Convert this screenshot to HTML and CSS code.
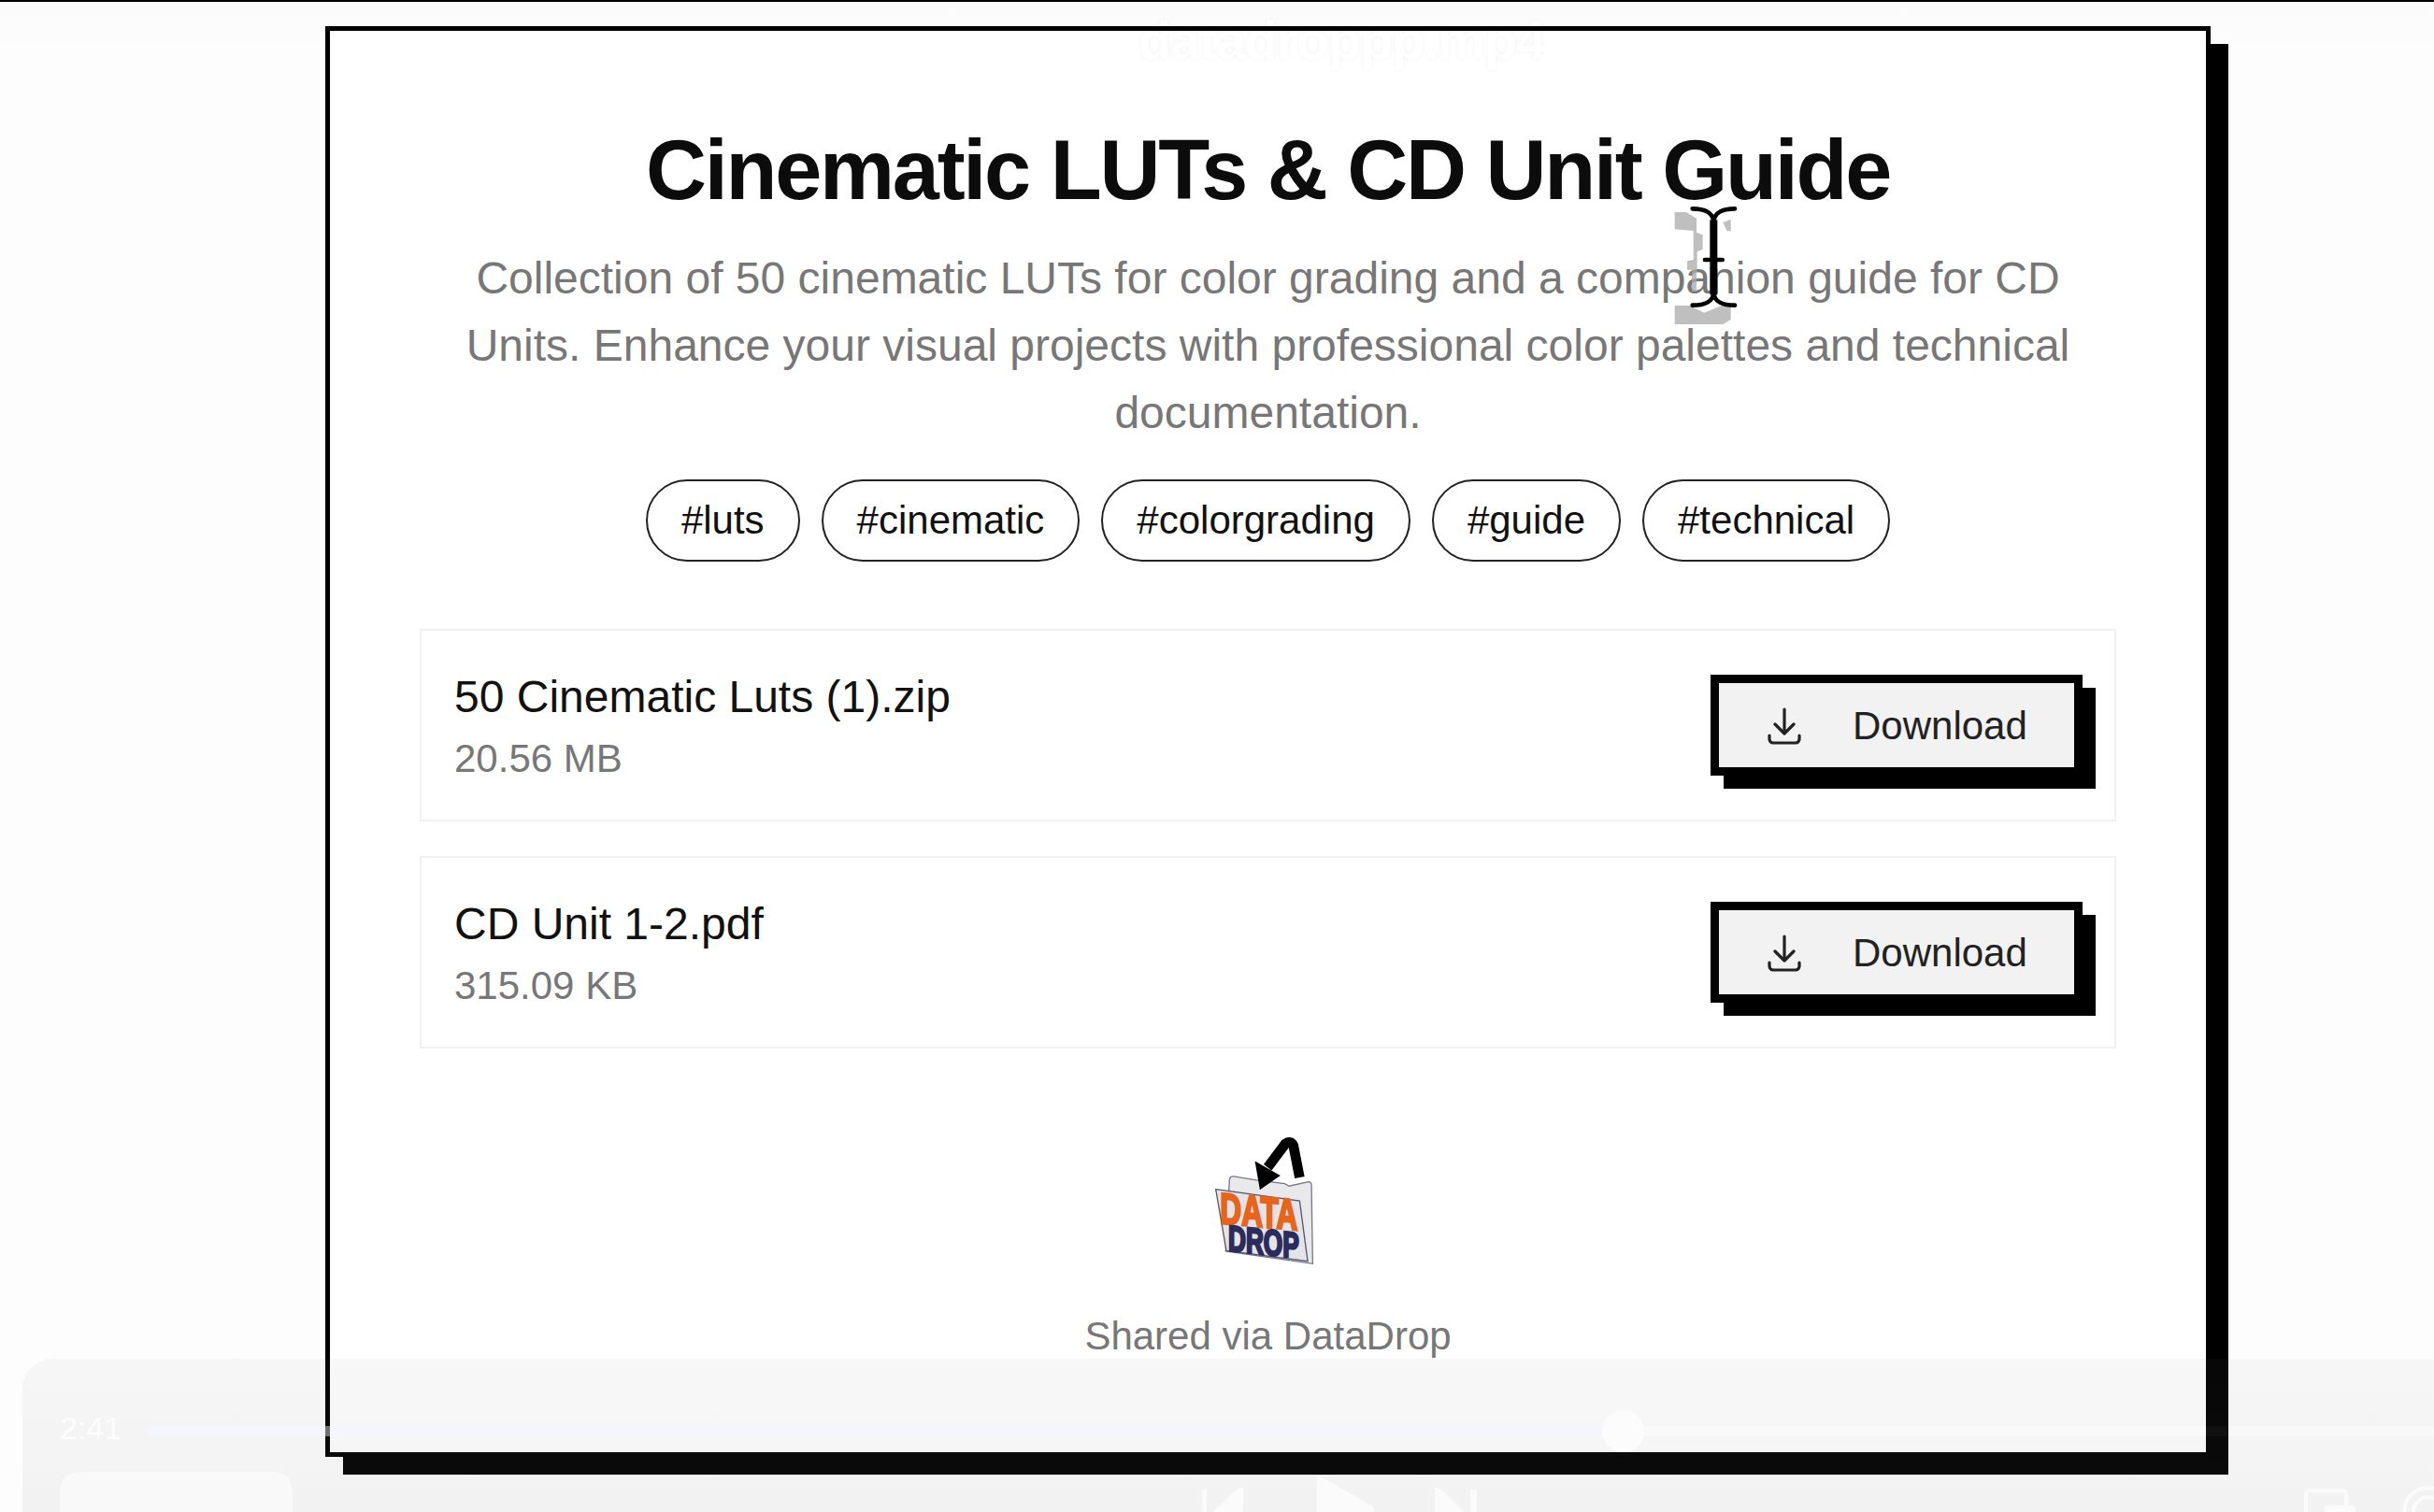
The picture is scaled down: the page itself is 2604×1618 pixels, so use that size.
FILE: index.html
```html
<!DOCTYPE html>
<html lang="en">
<head>
    <meta charset="UTF-8">
    <meta name="viewport" content="width=device-width, initial-scale=1.0">
    <title>Cinematic LUTs &amp; CD Unit Guide</title>
    <link rel="stylesheet" href="styles.css">
</head>
<body>
    <div class="share-card">
        <div class="video-title">datadroppp.mp4</div>

        <h1>Cinematic LUTs &amp; CD Unit Guide</h1>
        <p class="description">Collection of 50 cinematic LUTs for color grading and a companion guide for CD Units. Enhance your visual projects with professional color palettes and technical documentation.</p>

        <div class="tags">
            <span class="tag">#luts</span>
            <span class="tag">#cinematic</span>
            <span class="tag">#colorgrading</span>
            <span class="tag">#guide</span>
            <span class="tag">#technical</span>
        </div>

        <div class="file-list">
            <div class="file-item">
                <div class="file-info">
                    <div class="file-name">50 Cinematic Luts (1).zip</div>
                    <div class="file-size">20.56 MB</div>
                </div>
                <button class="download-btn">
                    <svg class="download-icon" viewBox="0 0 24 24"><path d="M12 3v13M7 11l5 5 5-5M4 17v2a2 2 0 0 0 2 2h12a2 2 0 0 0 2-2v-2"/></svg>
                    Download
                </button>
            </div>
            <div class="file-item">
                <div class="file-info">
                    <div class="file-name">CD Unit 1-2.pdf</div>
                    <div class="file-size">315.09 KB</div>
                </div>
                <button class="download-btn">
                    <svg class="download-icon" viewBox="0 0 24 24"><path d="M12 3v13M7 11l5 5 5-5M4 17v2a2 2 0 0 0 2 2h12a2 2 0 0 0 2-2v-2"/></svg>
                    Download
                </button>
            </div>
        </div>

        <div class="card-footer">
            <svg class="logo" viewBox="170 80 355 415">
                <path class="logo-back" d="M222 222q0-14 14-13l74 12 90 11 14 8 62-14q10 0 10 12l4 252-280-40z"/>
                <path class="logo-front" d="M178 250l270 38 26 194-262-34z"/>
                <path class="logo-arrow" d="M448 212L428 110q-8-18-26-6L345 180"/>
                <path class="logo-head" d="M304 160l82 46-66 46z"/>
                <text class="logo-data" transform="translate(192 360) skewY(5)" textLength="250" lengthAdjust="spacingAndGlyphs">DATA</text>
                <text class="logo-drop" transform="translate(218 448) skewY(6)" textLength="228" lengthAdjust="spacingAndGlyphs">DROP</text>
            </svg>
            <div class="shared-via">Shared via DataDrop</div>
        </div>
    </div>

    <div class="player">
        <div class="player-progress">
            <span class="player-time">2:41</span>
            <div class="player-track">
                <div class="player-played"></div>
                <div class="player-knob"></div>
            </div>
        </div>
        <div class="player-controls">
            <div class="player-volume"></div>
            <svg class="player-transport" viewBox="0 0 300 60">
                <path d="M0 19h5v41H0zM44 19v41H8V50q0-3 2-6l26-24q8-6 8-1z"/>
                <path d="M123 3l58 33q3 2 3 6v18h-61z"/>
                <path d="M249 19v41h34V50q0-3-2-6l-24-24q-8-6-8-1zM287 19h7v41h-7z"/>
            </svg>
            <svg class="player-extras" viewBox="0 0 144 43">
                <path class="player-extras-line" d="M7 43V24q0-4 4-4h35q4 0 4 4v19"/>
                <path d="M27 43V40q0-4 4-4h25q4 0 4 4v3z"/>
                <path class="player-extras-line" d="M112 43a26 26 0 0 1 52 0M122 43a16 16 0 0 1 32 0"/>
            </svg>
        </div>
    </div>

    <svg class="cursor-ghost" viewBox="255 75 270 420">
        <path d="M275 105H312L345 125V170L365 178V225L347 232V300H345V360H330V290H315V262L335 258V165L275 160zM430 138l25-10v38h-12zM275 405H322L370 428 425 405H455V450L430 465H275z"/>
    </svg>
    <svg class="text-cursor" viewBox="255 75 270 420">
        <path d="M332 94c38 0 68 12 68 44M468 94c-38 0-68 12-68 44M400 362c0 30-30 42-68 42M400 362c0 30 30 42 68 42M372 258h56"/>
        <path class="text-cursor-stem" d="M400 130v240"/>
    </svg>
</body>
</html>
```
FILE: styles.css
```css
html, body {
    height: 100%;
}
body {
    position: relative;
    box-sizing: border-box;
    margin: 0;
    padding-top: 26px;
    border-top: 2px solid #000;
    overflow: hidden;
    background: linear-gradient(#fbfbfb, #fdfdfd 60px);
    font-family: "Liberation Sans", Arial, sans-serif;
    color: #111;
}
.share-card {
    position: relative;
    box-sizing: border-box;
    width: 2017px;
    height: 1531px;
    margin-left: 348px;
    padding: 102px 101px 0;
    background-color: #fff;
    box-shadow: 19px 19px 0 #000;
    text-align: center;
}
/* border sits on a layer of its own so the faded title slips under it */
.share-card::after {
    content: "";
    position: absolute;
    inset: 0;
    z-index: 2;
    border: 5px solid #000;
    pointer-events: none;
}
.video-title {
    position: absolute;
    top: -19px;
    left: 870px;
    z-index: 1;
    font-size: 58px;
    font-weight: bold;
    letter-spacing: -1.4px;
    color: #fff;
    text-shadow: 0 0 5px rgba(0,0,0,0.05);
}
h1 {
    margin: 0;
    font-size: 90px;
    line-height: 104px;
    letter-spacing: -2.25px;
    color: #0c0c0c;
}
.description {
    margin: 28px 0 0;
    font-size: 48px;
    line-height: 72px;
    color: #777;
}
.tags {
    display: flex;
    justify-content: center;
    gap: 23px;
    margin-top: 35px;
}
.tag {
    padding: 18px 36px;
    border: 2px solid #222;
    border-radius: 44px;
    font-size: 42px;
    line-height: 48px;
    color: #111;
}
.file-list {
    display: flex;
    flex-direction: column;
    gap: 37px;
    margin-top: 72px;
}
.file-item {
    display: flex;
    justify-content: space-between;
    align-items: center;
    box-sizing: border-box;
    height: 206px;
    padding: 0 34px 0 35px;
    border: 2px solid #f1f1f1;
    text-align: left;
}
.file-info {
    padding-top: 3px;
}
.file-name {
    font-size: 48px;
    line-height: 56px;
    color: #111;
}
.file-size {
    margin-top: 13px;
    font-size: 42px;
    line-height: 50px;
    color: #777;
}
.download-btn {
    display: flex;
    align-items: center;
    gap: 49px;
    box-sizing: border-box;
    width: 398px;
    height: 108px;
    padding: 1px 0 0 46px;
    border: 9px solid #000;
    border-radius: 0;
    background-color: #f2f2f2;
    box-shadow: 14px 14px 0 #000;
    font-family: inherit;
    font-size: 42px;
    color: #222;
}
.download-icon {
    width: 48px;
    height: 48px;
    fill: none;
    stroke: #222;
    stroke-width: 1.6;
    stroke-linecap: round;
    stroke-linejoin: round;
}
.card-footer {
    margin-top: 94px;
}
.logo {
    display: block;
    width: 118px;
    height: 138px;
    margin: 0 auto;
    overflow: visible;
}
.logo-back {
    fill: #e9e9ec;
    stroke: #77778a;
    stroke-width: 4;
}
.logo-front {
    fill: #e4e4e8;
    stroke: #55556e;
    stroke-width: 4;
}
.logo-arrow {
    fill: none;
    stroke: #000;
    stroke-width: 32;
    stroke-linejoin: round;
}
.logo-head {
    fill: #000;
}
.logo-data, .logo-drop {
    font-family: "Liberation Sans", sans-serif;
    font-weight: bold;
    stroke-width: 8;
}
.logo-data {
    font-size: 140px;
    fill: #e8641a;
    stroke: #e8641a;
}
.logo-drop {
    font-size: 116px;
    fill: #2b2b5c;
    stroke: #2b2b5c;
}
.shared-via {
    margin-top: 51px;
    font-size: 42px;
    line-height: 50px;
    color: #777;
}

/* faded video player showing through the page */
.player {
    position: absolute;
    top: 1452px;
    left: 24px;
    right: -40px;
    bottom: 0;
    z-index: 3;
    box-sizing: border-box;
    padding: 57px 40px 0;
    border-radius: 32px 32px 0 0;
    background: linear-gradient(rgba(127,127,127,0.055), rgba(127,127,127,0.085));
    overflow: hidden;
}
.player-progress {
    display: flex;
    align-items: center;
    gap: 28px;
    height: 40px;
}
.player-time {
    margin-bottom: 6px;
    font-size: 34px;
    line-height: 40px;
    color: #fdfdfd;
}
/* the stops leave out the stretch that crosses the card's black shadow */
.player-track {
    position: relative;
    flex: 1;
    height: 11px;
    background: linear-gradient(90deg, rgba(255,255,255,0.4) 2202px, rgba(255,255,255,0.03) 2202px 2226px, rgba(255,255,255,0.4) 2226px);
}
.player-played {
    width: 63.6%;
    height: 100%;
    background: linear-gradient(90deg, #f3f6fc 190px, rgba(255,255,255,0.03) 190px 195px, #f3f6fc 195px);
}
.player-knob {
    position: absolute;
    top: -17px;
    left: 63.6%;
    width: 45px;
    height: 45px;
    border-radius: 50%;
    background-color: #fcfcfc;
}
.player-controls {
    display: flex;
    margin-top: 24px;
}
.player-volume {
    width: 249px;
    height: 60px;
    border-radius: 20px 20px 0 0;
    background-color: rgba(255,255,255,0.5);
}
.player-transport {
    width: 300px;
    height: 60px;
    margin-left: 973px;
    fill: #fbfbfb;
}
.player-extras {
    width: 144px;
    height: 43px;
    margin-left: auto;
    fill: #fbfbfb;
}
.player-extras-line {
    fill: none;
    stroke: #fbfbfb;
    stroke-width: 4;
}

/* mouse cursor and the ghost it leaves behind */
.cursor-ghost, .text-cursor {
    position: absolute;
    top: 215px;
    left: 1785px;
    z-index: 4;
    width: 90px;
    height: 140px;
}
.cursor-ghost {
    fill: rgba(170,170,170,0.75);
}
.text-cursor {
    fill: none;
    stroke: #000;
    stroke-width: 14;
    stroke-linecap: round;
}
.text-cursor-stem {
    stroke-width: 24;
    stroke-linecap: butt;
}
```
